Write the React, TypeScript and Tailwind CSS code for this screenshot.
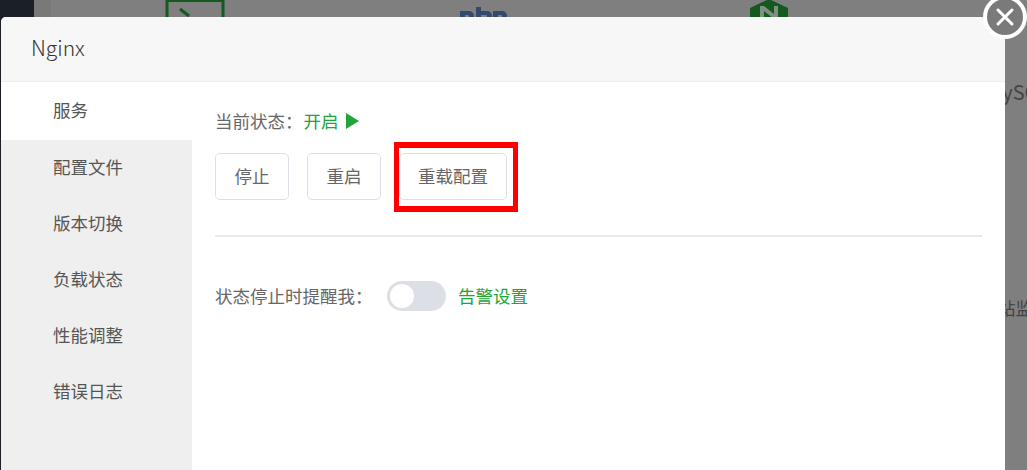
const font = "[font-family:'Noto_Sans_CJK_SC','Noto_Sans',sans-serif]";

const menu = ["服务", "配置文件", "版本切换", "负载状态", "性能调整", "错误日志"];

function Background() {
  return (
    <div className="flex h-full w-full bg-[#7f7f7f]">
      <div className="h-full w-[34px] shrink-0 bg-[#1b2026]" />
      <div className="h-full w-[17px] shrink-0 bg-[#797979]" />
      <div className="relative flex-1">
        <svg className="absolute left-[114px] top-[-6px]" width="60" height="30" viewBox="0 0 60 30" fill="none">
          <path d="M2 2h56v26H2z" stroke="#14591f" strokeWidth="3" />
          <path d="M2 6h56" stroke="#14591f" strokeWidth="4" />
          <path d="M15 15l9 7" stroke="#14591f" strokeWidth="3" />
        </svg>
        <svg className="absolute left-[408px] top-[6px]" width="48" height="14" viewBox="0 0 48 14" fill="#33496f">
          <path d="M1 14V5h9a5 5 0 0 1 5 5v4h-5v-4a1 1 0 0 0-1-1H6v5z" />
          <path d="M17 14V1h5v4h6a5 5 0 0 1 5 5v4h-5v-4a1 1 0 0 0-1-1h-5v5z" />
          <path d="M34 14V5h9a5 5 0 0 1 5 5v4h-5v-4a1 1 0 0 0-1-1h-3v5z" />
        </svg>
        <svg className="absolute left-[699px] top-[-1px]" width="38" height="20" viewBox="0 0 38 20">
          <path d="M19 0l19 9v11H0V9z" fill="#14591f" />
          <path d="M10 20V7h4l10 8V7h4v13h-4l-10-8v8z" fill="#7f8f82" />
        </svg>
        <span className={`absolute left-[935px] top-[80px] whitespace-nowrap text-[20px] leading-6 text-[#444] ${font}`}>MySQL</span>
        <span className={`absolute left-[947px] top-[296px] whitespace-nowrap text-[17.5px] leading-6 text-[#444] ${font}`}>站监</span>
      </div>
    </div>
  );
}

export default function App() {
  return (
    <div className={`relative h-[470px] w-[1027px] overflow-hidden ${font}`}>
      <Background />

      <div className="absolute left-px top-[17px] flex h-[470px] w-[1004px] flex-col overflow-hidden rounded-tl-[5px] bg-white">
        <div className="flex h-[65px] shrink-0 items-center border-b border-[#eeeeee] bg-[#f7f7f7] pb-[2px] pl-[30px] text-[21px] font-light text-[#333]">
          Nginx
        </div>
        <div className="flex flex-1">
          <div className="w-[191px] shrink-0 bg-[#efefef]">
            {menu.map((m, i) => (
              <div
                key={m}
                className={`flex items-center pl-[52px] text-[17.5px] text-[#555] ${i === 0 ? "h-[58px] bg-white pb-[2px]" : "h-[56px] pb-[2px]"}`}
              >
                {m}
              </div>
            ))}
          </div>
          <div className="flex-1 px-[23px] pt-[25px]">
            <div className="flex h-[28px] items-center text-[17.5px] text-[#666]">
              <span>当前状态：</span>
              <span className="ml-px text-[#20a53a]">开启</span>
              <svg className="ml-[7px]" width="13" height="16" viewBox="0 0 13 16">
                <path d="M0 0l13 8L0 16z" fill="#20a53a" />
              </svg>
            </div>
            <div className="mt-[18px] flex items-start">
              <button className="h-[47px] w-[74px] rounded-[5px] border border-[#dcdfe6] bg-white text-[17.5px] text-[#666]">停止</button>
              <button className="ml-[18px] h-[47px] w-[74px] rounded-[5px] border border-[#dcdfe6] bg-white text-[17.5px] text-[#666]">重启</button>
              <div className="relative ml-[18px]">
                <button className="h-[47px] w-[108px] rounded-[5px] border border-[#dcdfe6] bg-white text-[17.5px] text-[#666]">重载配置</button>
                <div className="absolute left-[-5px] top-[-11px] h-[70px] w-[124px] border-x-[5px] border-y-[6px] border-[#ff0000]" />
              </div>
            </div>
            <div className="mt-[35px] h-[2px] w-[767px] bg-[#e8e8ee]" />
            <div className="mt-[44px] flex items-center">
              <span className="w-[172px] text-[17.5px] text-[#666]">状态停止时提醒我：</span>
              <div className="flex h-[30px] w-[59px] items-center rounded-full bg-[#dcdfe6] pl-[3px]">
                <div className="h-[24px] w-[24px] rounded-full bg-white" />
              </div>
              <span className="ml-[12px] text-[17.5px] text-[#20a53a]">告警设置</span>
            </div>
          </div>
        </div>
      </div>

      <div className="absolute left-[983px] top-[-5px] flex h-[44px] w-[44px] items-center justify-center rounded-full border-[4px] border-white bg-[#7a7a7a]">
        <svg width="22" height="22" viewBox="0 0 22 22">
          <path d="M4 4l14 14M18 4L4 18" stroke="#fff" strokeWidth="3" strokeLinecap="round" />
        </svg>
      </div>
    </div>
  );
}
